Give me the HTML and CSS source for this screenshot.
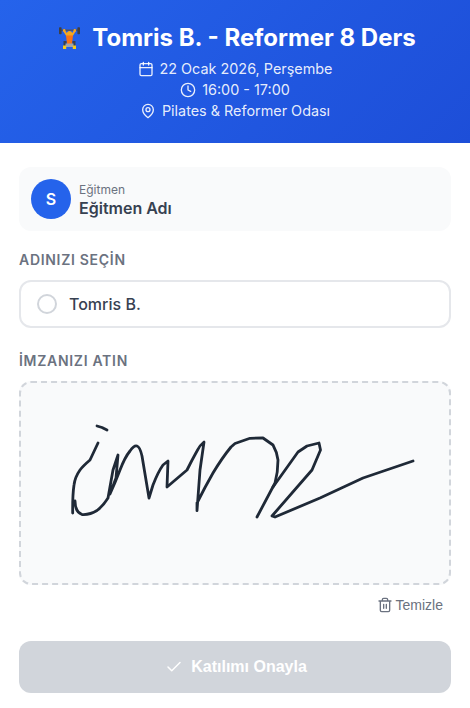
FILE: index.html
```html
<!DOCTYPE html>
<html lang="tr">
<head>
<meta charset="utf-8">
<title>Katılım</title>
<link rel="stylesheet" href="styles.css">
</head>
<body>
<header class="hero">
  <h1 class="hero-title">
    <svg class="emoji" viewBox="0 0 29 24" role="img" aria-label="Halter">
      <rect x="5" y="3.500" width="21" height="1.300" fill="#52525b"/>
      <rect x="5" y="1.200" width="2.600" height="7" rx="0.800" fill="#3f3f46"/>
      <rect x="23.400" y="1.200" width="2.600" height="7" rx="0.800" fill="#3f3f46"/>
      <path d="M10 4.500L13.500 10M21 4.500L17.500 10" stroke="#f5a623" stroke-width="2.200" fill="none"/>
      <rect x="9" y="3" width="2.400" height="2.800" rx="1" fill="#f5a623"/>
      <rect x="19.600" y="3" width="2.400" height="2.800" rx="1" fill="#f5a623"/>
      <circle cx="15.500" cy="7.500" r="2.600" fill="#f6a81c"/>
      <path d="M12 9.500h7l-1 8.500h-5z" fill="#f97316"/>
      <rect x="9.500" y="15" width="3" height="5" fill="#374151"/>
      <rect x="18.500" y="15" width="3" height="5" fill="#374151"/>
      <rect x="11.500" y="17.500" width="8" height="3.500" fill="#9ca3af"/>
      <rect x="9" y="19.500" width="3.200" height="3.500" fill="#facc15"/>
      <rect x="18.800" y="19.500" width="3.200" height="3.500" fill="#facc15"/>
    </svg>
    <span>Tomris B. - Reformer 8 Ders</span>
  </h1>
  <div class="hero-meta">
    <div class="meta-row">
      <svg class="meta-icon" viewBox="0 0 24 24"><rect x="3" y="4" width="18" height="18" rx="2"/><path d="M16 2v4M8 2v4M3 10h18"/></svg>
      <span>22 Ocak 2026, Perşembe</span>
    </div>
    <div class="meta-row">
      <svg class="meta-icon" viewBox="0 0 24 24"><circle cx="12" cy="12" r="10"/><path d="M12 6v6l4 2"/></svg>
      <span>16:00 - 17:00</span>
    </div>
    <div class="meta-row">
      <svg class="meta-icon" viewBox="0 0 24 24"><path d="M20 10c0 6-8 12-8 12s-8-6-8-12a8 8 0 0 1 16 0Z"/><circle cx="12" cy="10" r="3"/></svg>
      <span>Pilates &amp; Reformer Odası</span>
    </div>
  </div>
</header>
<main class="content">
  <section class="trainer">
    <div class="avatar">S</div>
    <div class="trainer-text">
      <div class="trainer-label">Eğitmen</div>
      <div class="trainer-name">Eğitmen Adı</div>
    </div>
  </section>
  <div class="section-label">ADINIZI SEÇİN</div>
  <div class="option"><span class="radio"></span><span>Tomris B.</span></div>
  <div class="section-label second">İMZANIZI ATIN</div>
  <div class="signature">
    <svg class="signature-ink" viewBox="21 383 428 200">
      <path d="M97 426L102 427.500L107 430"/>
      <path d="M98 443L90 460Q83 466 80 470Q75 477 74 485Q72.500 495 72.700 513"/>
      <path d="M75 501Q75 512 82 514.500Q90 515 97 510.500Q103 506 108 498L113 470L118 455L116 478L110 494Q115 483 120 470Q125 457 130 451Q134 445 137 446Q140 447 142 456L149 498L153 485Q158 472 163 465L168 461L167 487L187 470Q192 460 197 451Q200 445 204 442L200 470L197 510.700L197 503Q205 487 213 473Q222 458 231 447L235 443.500L250 438.300L263 438L273 445Q277 452 278 460Q278 472 275 483L257 517"/>
      <path d="M273 487L298 452L307 446L319 443L320.500 450L312 470L272 516L275 517L320 498L363 478L413 461"/>
    </svg>
  </div>
  <div class="clear-row">
    <button class="clear" type="button">
      <svg class="clear-icon" viewBox="0 0 24 24"><path d="M3 6h18M19 6v14a2 2 0 0 1-2 2H7a2 2 0 0 1-2-2V6M8 6V4a2 2 0 0 1 2-2h4a2 2 0 0 1 2 2v2M10 11v6M14 11v6"/></svg>
      <span>Temizle</span>
    </button>
  </div>
  <button class="submit" type="button">
    <svg class="submit-icon" viewBox="0 0 24 24"><path d="M20 6L9 17l-5-5"/></svg>
    <span>Katılımı Onayla</span>
  </button>
</main>
</body>
</html>
```
FILE: styles.css
```css
* { box-sizing: border-box; }
html, body { margin: 0; padding: 0; }
body {
  width: 470px;
  height: 708px;
  overflow: hidden;
  background: #fff;
  color: #374151;
  font-family: Inter, "Noto Sans", sans-serif;
}
.hero {
  height: 143px;
  padding: 21px 19px 0;
  background: linear-gradient(135deg, #2563eb 0%, #1d4ed8 100%);
  color: #fff;
  text-align: center;
}
.hero-title {
  margin: 0 0 3px;
  display: flex;
  justify-content: center;
  align-items: center;
  gap: 9px;
  height: 34px;
  font-size: 24px;
  line-height: 34px;
  font-weight: 700;
}
.emoji { width: 29px; height: 24px; flex: none; }
.hero-meta { color: rgba(255, 255, 255, 0.9); font-size: 14.400px; line-height: 21px; }
.meta-row { display: flex; justify-content: center; align-items: center; gap: 6px; height: 21px; }
.meta-icon {
  width: 16px;
  height: 16px;
  fill: none;
  stroke: currentColor;
  stroke-width: 2;
  stroke-linecap: round;
  stroke-linejoin: round;
}
.content { padding: 24px 19px 0; }
.trainer {
  height: 64px;
  padding: 12px;
  display: flex;
  align-items: center;
  gap: 8px;
  background: #f9fafb;
  border-radius: 12px;
}
.avatar {
  width: 40px;
  height: 40px;
  border-radius: 50%;
  background: #2563eb;
  color: #fff;
  display: flex;
  justify-content: center;
  align-items: center;
  font-size: 16px;
  font-weight: 600;
}
.trainer-text { margin-top: 1px; }
.trainer-label { font-size: 12px; line-height: 16px; color: #6b7280; }
.trainer-name { font-size: 16px; line-height: 20px; font-weight: 600; color: #374151; }
.section-label {
  margin-top: 20px;
  height: 18px;
  font-size: 14px;
  line-height: 18px;
  font-weight: 600;
  letter-spacing: 0.7px;
  color: #6b7280;
}
.section-label.second { margin-top: 24px; }
.option {
  margin-top: 11px;
  height: 48px;
  padding: 0 16px;
  display: flex;
  align-items: center;
  gap: 12px;
  border: 2px solid #e5e7eb;
  border-radius: 12px;
  font-size: 16px;
  font-weight: 500;
  color: #374151;
}
.radio { width: 20px; height: 20px; border: 2px solid #d1d5db; border-radius: 50%; }
.signature {
  margin-top: 11px;
  height: 204px;
  background: #f9fafb;
  border: 2px dashed #d1d5db;
  border-radius: 12px;
}
.signature-ink {
  display: block;
  width: 100%;
  height: 100%;
  fill: none;
  stroke: #1f2937;
  stroke-width: 2.800;
  stroke-linecap: round;
  stroke-linejoin: round;
}
.clear-row { display: flex; justify-content: flex-end; margin-top: 8px; padding-right: 8px; }
.clear {
  height: 24px;
  padding: 0;
  display: flex;
  align-items: center;
  gap: 3px;
  border: 0;
  background: none;
  color: #6b7280;
  font-family: "Liberation Sans", Arial, sans-serif;
  font-size: 14px;
}
.clear-icon {
  width: 16px;
  height: 16px;
  fill: none;
  stroke: currentColor;
  stroke-width: 2;
  stroke-linecap: round;
  stroke-linejoin: round;
}
.submit {
  margin-top: 24px;
  width: 100%;
  height: 52px;
  padding-left: 8px;
  display: flex;
  justify-content: center;
  align-items: center;
  gap: 8px;
  border: 0;
  border-radius: 12px;
  background: #d1d5db;
  color: #fff;
  font-family: "Liberation Sans", Arial, sans-serif;
  font-size: 16px;
  font-weight: 700;
}
.submit-icon {
  width: 18px;
  height: 18px;
  fill: none;
  stroke: currentColor;
  stroke-width: 2;
  stroke-linecap: round;
  stroke-linejoin: round;
}
```
